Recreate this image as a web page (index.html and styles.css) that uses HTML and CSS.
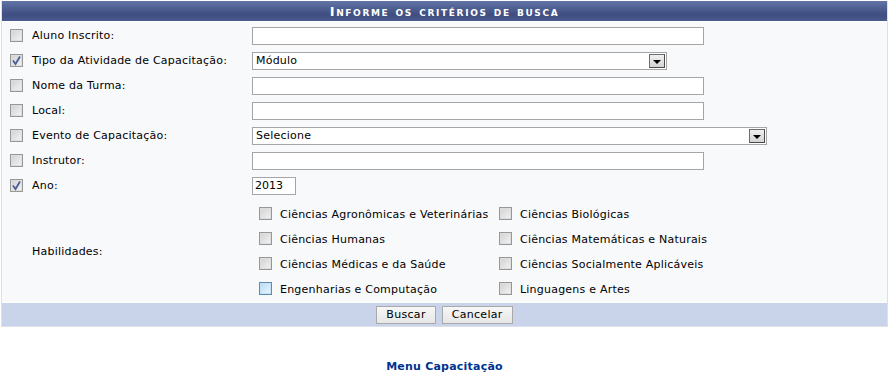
FILE: index.html
```html
<!DOCTYPE html>
<html lang="pt">
<head>
<meta charset="utf-8">
<title>Busca</title>
<link rel="stylesheet" href="styles.css">
</head>
<body>
<div class="panel">
  <div class="caption">Informe os critérios de busca</div>
  <div class="body">
    <div class="row"><span class="cb"></span><span class="lbl">Aluno Inscrito:</span><span class="txt w452"></span></div>
    <div class="row"><span class="cb on"><svg viewBox="0 0 13 13"><path d="M3 6.5 L5.5 10 L10 2.5" fill="none" stroke="#4a5f9a" stroke-width="1.8"/></svg></span><span class="lbl">Tipo da Atividade de Capacitação:</span><span class="sel w415"><span class="val">Módulo</span><span class="arrow"></span></span></div>
    <div class="row"><span class="cb"></span><span class="lbl">Nome da Turma:</span><span class="txt w452"></span></div>
    <div class="row"><span class="cb"></span><span class="lbl">Local:</span><span class="txt w452"></span></div>
    <div class="row"><span class="cb"></span><span class="lbl">Evento de Capacitação:</span><span class="sel w515"><span class="val">Selecione</span><span class="arrow"></span></span></div>
    <div class="row"><span class="cb"></span><span class="lbl">Instrutor:</span><span class="txt w452"></span></div>
    <div class="row"><span class="cb on"><svg viewBox="0 0 13 13"><path d="M3 6.5 L5.5 10 L10 2.5" fill="none" stroke="#4a5f9a" stroke-width="1.8"/></svg></span><span class="lbl">Ano:</span><span class="txt w44">2013</span></div>
    <div class="hab">
      <span class="hablbl">Habilidades:</span>
      <div class="grid">
        <label class="opt"><span class="cb"></span>Ciências Agronômicas e Veterinárias</label>
        <label class="opt"><span class="cb"></span>Ciências Biológicas</label>
        <label class="opt"><span class="cb"></span>Ciências Humanas</label>
        <label class="opt"><span class="cb"></span>Ciências Matemáticas e Naturais</label>
        <label class="opt"><span class="cb"></span>Ciências Médicas e da Saúde</label>
        <label class="opt"><span class="cb"></span>Ciências Socialmente Aplicáveis</label>
        <label class="opt"><span class="cb hover"></span>Engenharias e Computação</label>
        <label class="opt"><span class="cb"></span>Linguagens e Artes</label>
      </div>
    </div>
  </div>
  <div class="foot">
    <span class="btn">Buscar</span><span class="btn">Cancelar</span>
  </div>
</div>
<div class="menu"><a href="#">Menu Capacitação</a></div>
</body>
</html>
```

FILE: styles.css
```css
html, body { margin: 0; padding: 0; background: #fff; }
body {
  font-family: "DejaVu Sans", Verdana, sans-serif;
  font-size: 11px;
  letter-spacing: 0.22px;
  color: #000;
  padding: 1px 1px 0 1px;
}
.panel {
  width: 885px;
  border: 1px solid #dde0e8;
  border-top: none;
  background: #f8f9fb;
}
.caption {
  height: 20px;
  line-height: 21px;
  text-align: center;
  color: #fff;
  font-weight: bold;
  font-variant: small-caps;
  font-size: 13px;
  letter-spacing: 1.65px;
  background: linear-gradient(#6374a6 0%, #4a5a8d 45%, #3f4d80 70%, #4a5a8c 100%);
  border-bottom: 1px solid #fff;
}
.row {
  display: flex;
  align-items: center;
  height: 25px;
  padding-top: 1px;
  margin-bottom: -1px;
}
.row > .cb { margin-left: 8px; }
.lbl { width: 220px; margin-left: 9px; }
.cb {
  display: inline-block;
  box-sizing: border-box;
  width: 13px;
  height: 13px;
  border: 1px solid #979797;
  background: linear-gradient(135deg, #d0d0d0 0%, #e6e6e6 60%, #f4f4f4 100%);
  box-shadow: inset 0 0 0 1px #dedede;
  flex: none;
  position: relative;
}
.cb svg { position: absolute; left: -1px; top: -1px; width: 13px; height: 13px; }
.cb.hover {
  border-color: #5d8bb3;
  background: linear-gradient(135deg, #b8dcf4 0%, #d6ecfa 60%, #eef7fd 100%);
  box-shadow: inset 0 0 0 1px #c6e2f6;
}
.txt {
  box-sizing: border-box;
  display: inline-block;
  height: 18px;
  border: 1px solid #a5a5a5;
  background: #fff;
  line-height: 16px;
  padding-left: 2px;
  letter-spacing: 0;
}
.w452 { width: 452px; }
.w44 { width: 44px; }
.sel {
  box-sizing: border-box;
  display: inline-flex;
  align-items: center;
  justify-content: space-between;
  height: 18px;
  border: 1px solid #a5a5a5;
  background: #fff;
  padding: 0 1px 0 3px;
}
.w415 { width: 415px; }
.w515 { width: 515px; }
.arrow {
  box-sizing: border-box;
  width: 16px;
  height: 14px;
  border: 1px solid #6d6d6d;
  border-right-color: #4a4a4a;
  border-bottom-color: #4a4a4a;
  background: linear-gradient(#f0f0f0, #d4d4d4);
  display: flex;
  align-items: center;
  justify-content: center;
}
.arrow::after {
  content: "";
  border-left: 4px solid transparent;
  border-right: 4px solid transparent;
  border-top: 4px solid #000;
  margin-top: 2px;
}
.hab {
  display: flex;
  align-items: center;
  padding: 4px 0 1px 0;
}
.hablbl { width: 257px; padding-left: 30px; box-sizing: border-box; }
.grid {
  display: grid;
  grid-template-columns: 240px auto;
  grid-auto-rows: 25px;
}
.opt { display: flex; align-items: center; padding-top: 1px; }
.opt .cb { margin-right: 8px; margin-top: -1px; }
.foot {
  background: #c9d4ea;
  height: 23px;
  display: flex;
  align-items: center;
  justify-content: center;
  gap: 6px;
  border-top: 1px solid #fff;
}
.btn {
  box-sizing: border-box;
  display: inline-block;
  height: 18px;
  line-height: 15px;
  padding: 0 9px;
  border: 1px solid #a9a9a9;
  background: linear-gradient(#f7f7f7, #e6e6e6);
  font-size: 11px;
  letter-spacing: 0.3px;
}
.menu {
  text-align: center;
  margin-top: 33px;
}
.menu a {
  color: #003390;
  font-weight: bold;
  text-decoration: none;
  font-size: 11px;
}
```
